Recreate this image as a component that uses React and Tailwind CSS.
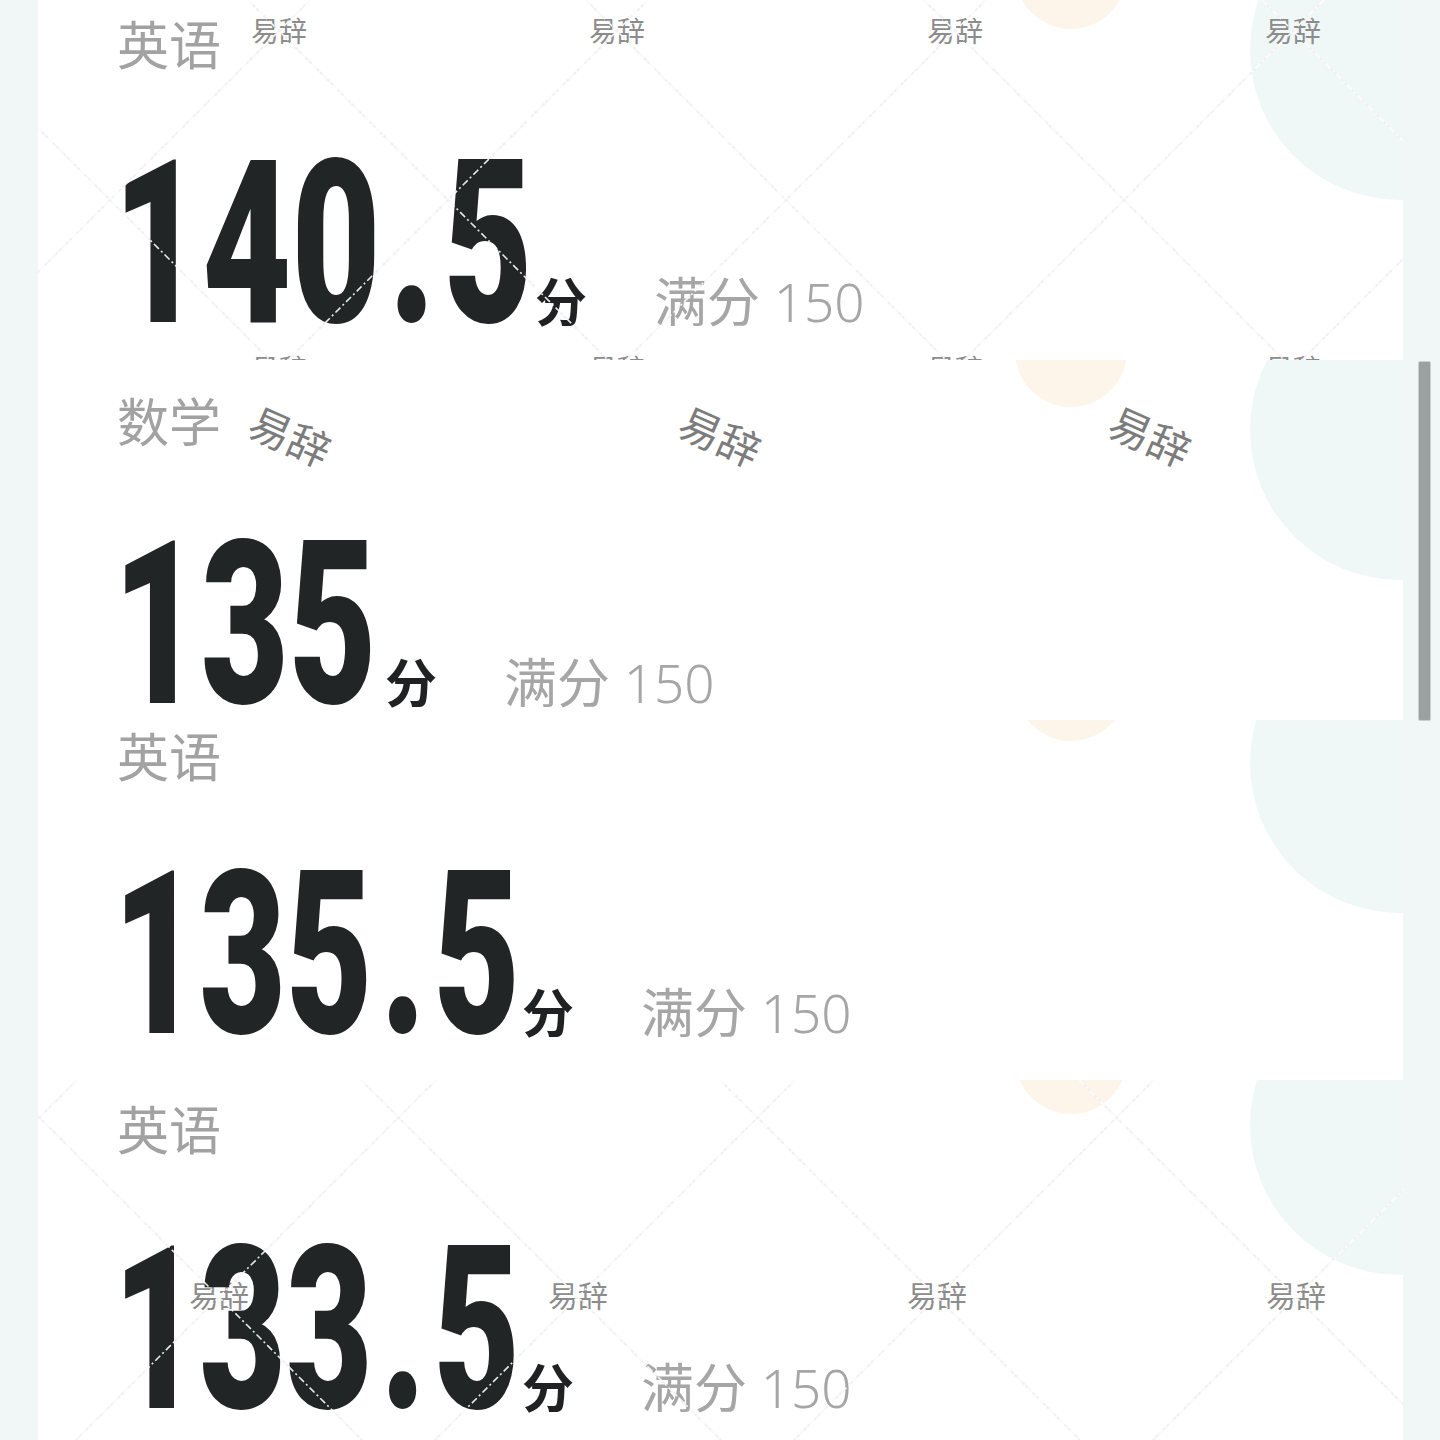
import React from 'react'

// card-local geometry, taken from the reference
const SEGMENTS = [
  {
    label: '英语', score: ['140', '5'], numW: 418, labelTop: 19, gap: 59,
    teal: -100, peach: -83, scale: 'scale-x-[0.675]',
    lattice: { cx: 241, cy: 31, p: 338 },
    marks: { rows: 2, cols: 4, size: 'text-[28px]', w: 'w-[56px]', gapX: 'gap-x-[282px]', gapY: 'gap-y-[310px]', pad: 'pl-[213px] pt-[17px]' },
  },
  {
    label: '数学', score: ['135'], numW: 268, labelTop: 36, gap: 63,
    teal: -80, peach: -65, scale: 'scale-x-[0.665]',
    rotated: true,
  },
  {
    label: '英语', score: ['135', '5'], numW: 405, labelTop: 11, gap: 58,
    teal: -107, peach: -91, scale: 'scale-x-[0.655]',
  },
  {
    label: '英语', score: ['133', '5'], numW: 405, labelTop: 24, gap: 60,
    teal: -105, peach: -78, scale: 'scale-x-[0.655]',
    lattice: { cx: 181, cy: 217, p: 359 },
    marks: { rows: 1, cols: 4, size: 'text-[30px]', w: 'w-[60px]', gapX: 'gap-x-[299px]', gapY: '', pad: 'pl-[151px] pt-[201px]' },
  },
]

const CARD_W = 1365
const SEG_H = 360

function latticeLines({ cx, cy, p }) {
  const lines = []
  const c0 = cx + cy
  const d0 = cy - cx
  for (let k = -6; k <= 8; k++) {
    const c = c0 + k * p
    lines.push([c, 0, c - SEG_H, SEG_H])
    const d = d0 + k * p
    lines.push([-d, 0, SEG_H - d, SEG_H])
  }
  return lines
}

function Lattice({ lattice, over }) {
  const lines = latticeLines(lattice)
  return (
    <svg
      className="absolute inset-0 pointer-events-none"
      width={CARD_W}
      height={SEG_H}
      viewBox={`0 0 ${CARD_W} ${SEG_H}`}
    >
      {lines.map(([x1, y1, x2, y2], i) => (
        <line
          key={i}
          x1={x1}
          y1={y1}
          x2={x2}
          y2={y2}
          stroke={over ? '#ffffff' : '#f1f1f1'}
          strokeWidth={over ? 1.6 : 2}
          strokeDasharray={over ? '7 3 2 3' : undefined}
          opacity={over ? 0.9 : 1}
        />
      ))}
    </svg>
  )
}

// watermark grid laid over the segment
function Marks({ m }) {
  return (
    <div className={`absolute inset-0 flex flex-col ${m.gapY} ${m.pad} pointer-events-none`}>
      {Array.from({ length: m.rows }).map((_, r) => (
        <div key={r} className={`flex ${m.gapX}`}>
          {Array.from({ length: m.cols }).map((_, c) => (
            <span key={c} className={`${m.w} shrink-0 ${m.size} leading-none text-[#8c8c8c] whitespace-nowrap`}>
              易辞
            </span>
          ))}
        </div>
      ))}
    </div>
  )
}

function RotatedMarks() {
  return (
    <div className="absolute inset-0 flex gap-x-[346px] pl-[210px] pt-[56px] pointer-events-none">
      {[0, 1, 2].map(i => (
        <span key={i} className="w-[84px] h-[42px] shrink-0 text-[42px] leading-none text-[#7c7c7c] whitespace-nowrap rotate-[24deg]">
          易辞
        </span>
      ))}
    </div>
  )
}

function Segment({ seg }) {
  return (
    <div className="relative h-[360px] overflow-hidden bg-white">
      {/* background decor */}
      <div
        className="absolute left-[977px] w-[112px] h-[112px] rounded-full bg-[#fdf5ea]"
        style={{ top: seg.peach }}
      />
      <div
        className="absolute left-[1212px] w-[300px] h-[300px] rounded-full bg-[#eff8f7]"
        style={{ top: seg.teal }}
      />
      {seg.lattice && <Lattice lattice={seg.lattice} />}
      {seg.marks && <Marks m={seg.marks} />}
      {seg.rotated && <RotatedMarks />}

      {/* content */}
      <div className="relative pl-[79px]" style={{ paddingTop: seg.labelTop }}>
        <div className="text-[52px] leading-none text-[#a2a2a2]">{seg.label}</div>
        <div className="flex items-baseline" style={{ marginTop: seg.gap }}>
          <div className="shrink-0 whitespace-nowrap -ml-[4px]" style={{ width: seg.numW + 4 }}>
            <span className={`inline-block origin-left ${seg.scale} font-['Roboto',sans-serif] font-black text-[228px] leading-none text-[#222526]`}>
              {seg.score[0]}
              {seg.score[1] && (
                <>
                  <span className="mx-[12px]">.</span>
                  {seg.score[1]}
                </>
              )}
            </span>
          </div>
          <span className="w-[54px] shrink-0 text-[52px] font-bold leading-none text-[#1f2122]">分</span>
          <span className="ml-[65px] text-[53px] leading-none text-[#a6a6a6] whitespace-nowrap">
            满分 <span className="font-['Noto_Sans',sans-serif] font-light">150</span>
          </span>
        </div>
      </div>

      {seg.lattice && <Lattice lattice={seg.lattice} over />}
    </div>
  )
}

export default function App() {
  return (
    <div
      className="relative h-[1440px] w-[1440px] overflow-hidden bg-[#f1f6f6]"
      style={{ fontFamily: "'Noto Sans', 'Noto Sans CJK SC', sans-serif" }}
    >
      <div className="ml-[38px] w-[1365px] flex flex-col">
        {SEGMENTS.map((seg, i) => (
          <Segment key={i} seg={seg} />
        ))}
      </div>

      {/* scrollbar */}
      <div className="absolute left-[1418px] top-[361px] w-[13px] h-[360px] rounded-[2px] bg-[#9ba1a0] border border-[#c9cfce]" />
    </div>
  )
}
